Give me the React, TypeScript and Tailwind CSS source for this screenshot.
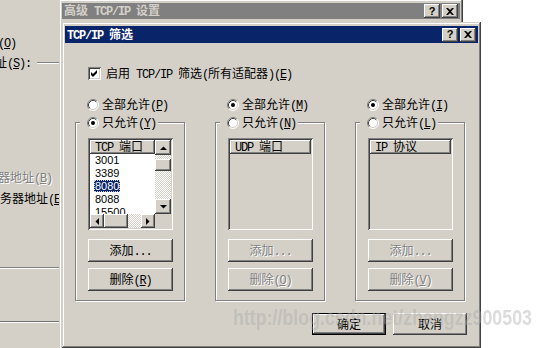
import React from 'react';

const raised = 'shadow-[inset_-1px_-1px_#404040,inset_1px_1px_#ffffff,inset_-2px_-2px_#808080,inset_2px_2px_#d4d0c8]';
const sunken = 'shadow-[inset_1px_1px_#808080,inset_-1px_-1px_#ffffff,inset_2px_2px_#404040,inset_-2px_-2px_#d4d0c8]';
const win = 'shadow-[inset_-1px_-1px_#404040,inset_1px_1px_#d4d0c8,inset_-2px_-2px_#808080,inset_2px_2px_#ffffff]';
const dither = 'bg-[image:repeating-conic-gradient(#d4d0c8_0%_25%,#ffffff_0%_50%)] bg-[length:2px_2px]';
const dim = 'text-[#808080] [text-shadow:1px_1px_0_#ffffff]';

const isWide = (c: string) => /[\u2E80-\u9FFF\uFF00-\uFFEF\u3000-\u303F]/.test(c);

// "&X" underlines X; latin runs get a narrow mono face like SimSun's half-width glyphs
function Label({ text }: { text: string }) {
  const parts: { s: string; wide: boolean; u: boolean }[] = [];
  let under = false;
  for (const ch of text) {
    if (ch === '&') {
      under = true;
      continue;
    }
    const wide = isWide(ch);
    const last = parts[parts.length - 1];
    if (!under && last && last.wide === wide && !last.u) last.s += ch;
    else parts.push({ s: ch, wide, u: under });
    under = false;
  }
  return (
    <>
      {parts.map((p, i) => (
        <span
          key={i}
          className={
            (p.wide ? '' : "font-['Liberation_Mono',monospace] text-[12px] tracking-[-1.2px] whitespace-pre") +
            (p.u ? ' underline underline-offset-[1px]' : '')
          }
        >
          {p.s}
        </span>
      ))}
    </>
  );
}

function Radio({ on }: { on?: boolean }) {
  return (
    <svg width="12" height="12" viewBox="0 0 12 12" className="shrink-0">
      <circle cx="6" cy="6" r="5" fill="#ffffff" />
      <path d="M9.89 2.11 A5.5 5.5 0 0 0 2.11 9.89" stroke="#808080" fill="none" />
      <path d="M2.11 9.89 A5.5 5.5 0 0 0 9.89 2.11" stroke="#ffffff" fill="none" />
      <path d="M9.18 2.82 A4.5 4.5 0 0 0 2.82 9.18" stroke="#404040" fill="none" />
      <path d="M2.82 9.18 A4.5 4.5 0 0 0 9.18 2.82" stroke="#d4d0c8" fill="none" />
      {on && <circle cx="6" cy="6" r="2" fill="#000000" />}
    </svg>
  );
}

function Check() {
  return (
    <div className={`h-[13px] w-[13px] shrink-0 bg-white ${sunken}`}>
      <svg width="13" height="13" viewBox="0 0 13 13">
        <path d="M3 5 L5 7 L9 3 L9 6 L5 10 L3 8 Z" fill="#000000" />
      </svg>
    </div>
  );
}

function Arrow({ dir }: { dir: 'up' | 'down' | 'left' | 'right' }) {
  const vert = dir === 'up' || dir === 'down';
  const pts = {
    up: '0,4 7,4 3.5,0.5',
    down: '0,0 7,0 3.5,3.5',
    left: '4,0 4,7 0.5,3.5',
    right: '0,0 0,7 3.5,3.5',
  }[dir];
  return (
    <svg width={vert ? 7 : 4} height={vert ? 4 : 7} viewBox={vert ? '0 0 7 4' : '0 0 4 7'}>
      <polygon points={pts} fill="#000000" />
    </svg>
  );
}

function SbBtn({ dir, className }: { dir: 'up' | 'down' | 'left' | 'right'; className: string }) {
  return (
    <div className={`flex shrink-0 items-center justify-center bg-[#d4d0c8] ${raised} ${className}`}>
      <Arrow dir={dir} />
    </div>
  );
}

function CapBtn({ kind }: { kind: 'help' | 'close' }) {
  return (
    <div className={`flex h-[14px] w-[16px] items-center justify-center bg-[#d4d0c8] ${raised}`}>
      {kind === 'help' ? (
        <span className="font-['Liberation_Sans',sans-serif] text-[11px] font-bold leading-none text-black">?</span>
      ) : (
        <svg width="8" height="7" viewBox="0 0 8 7">
          <path d="M0 0h2l2 2 2-2h2L5 3.5 8 7H6L4 5 2 7H0l3-3.5z" fill="#000000" />
        </svg>
      )}
    </div>
  );
}

function Btn({ text, disabled, def, className = '' }: { text: string; disabled?: boolean; def?: boolean; className?: string }) {
  return (
    <div
      className={`flex items-center justify-center bg-[#d4d0c8] ${raised} ${def ? 'border border-black' : ''} ${
        disabled ? dim : 'text-black'
      } ${className}`}
    >
      <span className="whitespace-nowrap">
        <Label text={text} />
      </span>
    </div>
  );
}

const ports = ['3001', '3389', '8080', '8088', '15500'];

function ListView({ header, enabled }: { header: string; enabled?: boolean }) {
  const head = (
    <div className={`flex h-[14px] shrink-0 items-center bg-[#d4d0c8] pl-[5px] ${raised}`}>
      <span className="whitespace-nowrap">
        <Label text={header} />
      </span>
    </div>
  );
  if (!enabled) {
    return (
      <div className={`ml-[12px] mt-[9px] h-[92px] w-[85px] bg-[#d4d0c8] p-[2px] ${sunken}`}>{head}</div>
    );
  }
  return (
    <div className={`ml-[12px] mt-[9px] flex h-[92px] w-[85px] bg-white p-[2px] ${sunken}`}>
      <div className="flex w-[65px] flex-col">
        {head}
        <div className="flex-1 overflow-hidden font-['Liberation_Sans',sans-serif] text-[11px] leading-[13px]">
          {ports.map((p) => (
            <div key={p} className="h-[13px] pl-[4px]">
              <span
                className={
                  p === '8080'
                    ? 'bg-[#0a246a] px-[1px] text-white outline-1 outline-dotted outline-[#d4d0c8] -outline-offset-1'
                    : 'px-[1px]'
                }
              >
                {p}
              </span>
            </div>
          ))}
        </div>
        <div className="flex h-[14px] shrink-0">
          <SbBtn dir="left" className="w-[14px]" />
          <div className={`w-[24px] shrink-0 bg-[#d4d0c8] ${raised}`} />
          <div className={`flex-1 ${dither}`} />
          <SbBtn dir="right" className="w-[14px]" />
        </div>
      </div>
      <div className="flex w-[16px] flex-col">
        <SbBtn dir="up" className="h-[15px]" />
        <div className={`h-[4px] ${dither}`} />
        <div className={`h-[12px] shrink-0 bg-[#d4d0c8] ${raised}`} />
        <div className={`flex-1 ${dither}`} />
        <SbBtn dir="down" className="h-[15px]" />
        <div className="h-[14px] shrink-0 bg-[#d4d0c8]" />
      </div>
    </div>
  );
}

function Column({
  all,
  only,
  header,
  del,
  allowAll,
}: {
  all: string;
  only: string;
  header: string;
  del: string;
  allowAll?: boolean;
}) {
  return (
    <div className="flex w-[110px] flex-col">
      <div className="flex h-[12px] items-center gap-[3px] pl-[12px]">
        <Radio on={allowAll} />
        <span className="whitespace-nowrap">
          <Label text={all} />
        </span>
      </div>
      <div className="mt-[11px] flex flex-col border border-[#808080] pb-[9px] shadow-[1px_1px_0_#ffffff,inset_1px_1px_0_#ffffff]">
        <div className="-mt-[6px] ml-[4px] flex h-[12px] items-center gap-[3px] self-start bg-[#d4d0c8] pl-[7px] pr-[2px]">
          <Radio on={!allowAll} />
          <span className="whitespace-nowrap">
            <Label text={only} />
          </span>
        </div>
        <ListView header={header} enabled={!allowAll} />
        <Btn text="添加..." disabled={allowAll} className="ml-[12px] mt-[9px] h-[23px] w-[85px]" />
        <Btn text={del} disabled={allowAll} className="ml-[12px] mt-[6px] h-[23px] w-[85px]" />
      </div>
    </div>
  );
}

export default function App() {
  return (
    <div className="relative h-[348px] w-[547px] overflow-hidden bg-white font-['Noto_Sans_CJK_SC',sans-serif] text-[12px] leading-[12px] text-black">
      {/* window behind, left */}
      <div className="absolute left-0 top-0 flex h-[348px] w-[59px] flex-col overflow-hidden bg-[#d4d0c8]">
        <div className="-ml-[2px] mt-[36px] h-[12px] whitespace-nowrap">
          <Label text="(&O)" />
        </div>
        <div className="mt-[9px] flex h-[12px] items-center">
          <span className="-ml-[5px] whitespace-nowrap">
            <Label text="址(&S):" />
          </span>
          <div className="ml-[6px] h-[2px] flex-1 border-t border-b border-t-[#808080] border-b-white" />
        </div>
        <div className={`-ml-[2px] mt-[102px] h-[12px] whitespace-nowrap ${dim}`}>
          <Label text="器地址(&B)" />
        </div>
        <div className="mt-[9px] h-[12px] whitespace-nowrap">
          <Label text="务器地址(&E)" />
        </div>
        <div className="mt-[63px] h-[2px] border-t border-b border-t-[#808080] border-b-white" />
        <div className="mt-[52px] h-[2px] border-t border-b border-t-[#707070] border-b-white" />
      </div>

      {/* 高级 TCP/IP 设置 */}
      <div className={`absolute left-[59px] top-[-1px] h-[370px] w-[404px] bg-[#d4d0c8] px-[3px] pt-[4px] ${win}`}>
        <div className="flex h-[16px] items-center justify-between bg-[#808080] pl-[2px] pr-[2px]">
          <span className="whitespace-nowrap font-bold text-[#d4d0c8]">
            <Label text="高级 TCP/IP 设置" />
          </span>
          <div className="flex gap-[2px]">
            <CapBtn kind="help" />
            <CapBtn kind="close" />
          </div>
        </div>
      </div>

      {/* TCP/IP 筛选 */}
      <div className={`absolute left-[62px] top-[22px] flex h-[326px] w-[419px] flex-col bg-[#d4d0c8] px-[3px] pt-[4px] ${win}`}>
        <div className="flex h-[17px] items-center justify-between bg-[#0a246a] pl-[2px] pr-[2px]">
          <span className="whitespace-nowrap font-bold text-white">
            <Label text="TCP/IP 筛选" />
          </span>
          <div className="flex gap-[2px]">
            <CapBtn kind="help" />
            <CapBtn kind="close" />
          </div>
        </div>

        <div className="flex flex-col pl-[10px]">
          <div className="ml-[13px] mt-[24px] flex h-[13px] items-center gap-[5px]">
            <Check />
            <span className="whitespace-nowrap">
              <Label text="启用 TCP/IP 筛选(所有适配器)(&E)" />
            </span>
          </div>

          <div className="mt-[19px] flex gap-[30px]">
            <Column all="全部允许(&P)" only="只允许(&Y)" header="TCP 端口" del="删除(&R)" />
            <Column all="全部允许(&M)" only="只允许(&N)" header="UDP 端口" del="删除(&O)" allowAll />
            <Column all="全部允许(&I)" only="只允许(&L)" header="IP 协议" del="删除(&V)" allowAll />
          </div>

          <div className="mt-[12px] flex justify-end gap-[7px] pr-[11px]">
            <Btn text="确定" def className="h-[22px] w-[74px]" />
            <Btn text="取消" className="h-[22px] w-[74px]" />
          </div>
        </div>
      </div>

      {/* blog watermark */}
      <div className="pointer-events-none absolute left-[233px] top-[312px] origin-left scale-x-[0.81] whitespace-nowrap font-['Liberation_Sans',sans-serif] text-[22px] font-bold text-[#a8a8a8]/40">
        http://blog.csdn.net/zhangzz900503
      </div>
    </div>
  );
}
